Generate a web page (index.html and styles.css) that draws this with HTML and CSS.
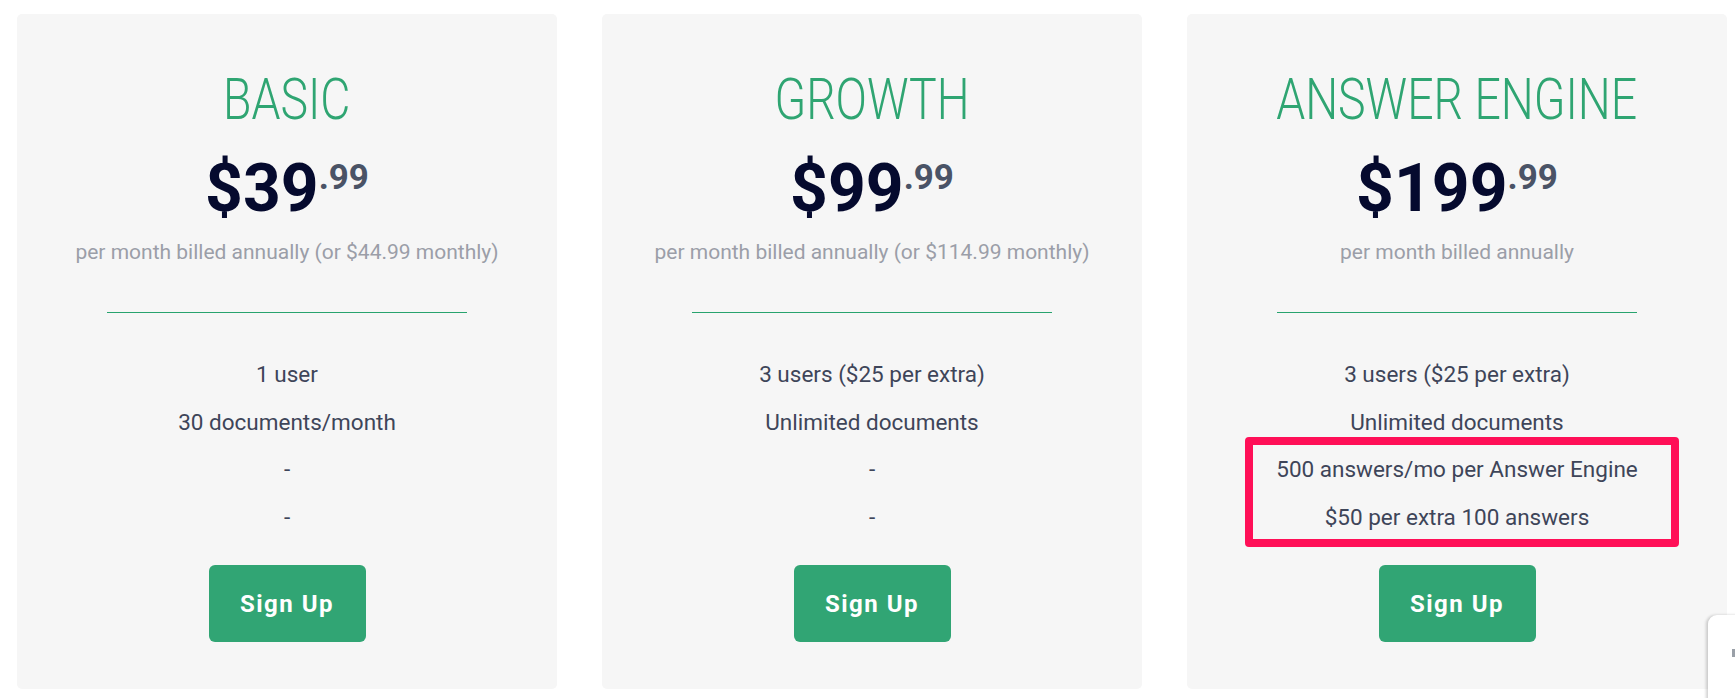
FILE: index.html
```html
<!DOCTYPE html>
<html lang="en">
<head>
<meta charset="utf-8">
<title>Pricing</title>
<link rel="stylesheet" href="styles.css">
</head>
<body>
<div class="pricing">
  <div class="card">
    <h2 class="plan"><span class="plan-name">BASIC</span></h2>
    <div class="price"><span class="amount">$39</span><span class="cents">.99</span></div>
    <p class="billing">per month billed annually (or $44.99 monthly)</p>
    <div class="divider"></div>
    <ul class="features">
      <li>1 user</li>
      <li>30 documents/month</li>
      <li>-</li>
      <li>-</li>
    </ul>
    <a class="signup" href="#">Sign Up</a>
  </div>
  <div class="card">
    <h2 class="plan"><span class="plan-name">GROWTH</span></h2>
    <div class="price"><span class="amount">$99</span><span class="cents">.99</span></div>
    <p class="billing">per month billed annually (or $114.99 monthly)</p>
    <div class="divider"></div>
    <ul class="features">
      <li>3 users ($25 per extra)</li>
      <li>Unlimited documents</li>
      <li>-</li>
      <li>-</li>
    </ul>
    <a class="signup" href="#">Sign Up</a>
  </div>
  <div class="card">
    <h2 class="plan"><span class="plan-name">ANSWER ENGINE</span></h2>
    <div class="price"><span class="amount">$199</span><span class="cents">.99</span></div>
    <p class="billing">per month billed annually</p>
    <div class="divider"></div>
    <ul class="features">
      <li>3 users ($25 per extra)</li>
      <li>Unlimited documents</li>
      <li>500 answers/mo per Answer Engine</li>
      <li>$50 per extra 100 answers</li>
    </ul>
    <a class="signup" href="#">Sign Up</a>
    <div class="highlight"></div>
  </div>
</div>
<div class="widget"><span class="widget-mark"></span></div>
</body>
</html>
```
FILE: styles.css
```css
html, body {
  margin: 0;
  padding: 0;
  background: #ffffff;
  font-family: Roboto, "Liberation Sans", Arial, sans-serif;
}

.pricing {
  display: flex;
  gap: 45px;
  padding: 14px 0 0 17px;
}

.card {
  position: relative;
  width: 540px;
  box-sizing: border-box;
  background: #f6f6f6;
  border-radius: 5px;
  padding: 50px 0 47px;
  display: flex;
  flex-direction: column;
  align-items: center;
  text-align: center;
}

.plan {
  margin: 0;
  font-size: 58px;
  line-height: 70px;
  font-weight: 300;
  color: #2fa572;
  white-space: nowrap;
}

.plan-name {
  display: inline-block;
  transform: scaleX(0.8);
}

.price {
  margin-top: 22px;
  display: flex;
  justify-content: center;
  align-items: flex-start;
}

.amount {
  font-size: 66px;
  line-height: 66px;
  font-weight: 700;
  color: #050a2e;
}

.cents {
  font-size: 35px;
  line-height: 43px;
  font-weight: 700;
  color: #4a5366;
}

.billing {
  margin: 15px 0 0;
  font-size: 21px;
  line-height: 31px;
  color: #9b9ea8;
}

.divider {
  margin-top: 44px;
  width: 360px;
  height: 1px;
  background: #28a36e;
}

.features {
  list-style: none;
  margin: 38px 0 0;
  padding: 0;
}

.features li {
  font-size: 22.5px;
  line-height: 47.5px;
  color: #3e4559;
}

.signup {
  margin-top: 24px;
  width: 157px;
  height: 77px;
  display: flex;
  align-items: center;
  justify-content: center;
  background: #31a574;
  border-radius: 6px;
  color: #ffffff;
  font-size: 24px;
  font-weight: 700;
  letter-spacing: 1.5px;
  text-decoration: none;
}

.highlight {
  position: absolute;
  left: 58px;
  top: 423px;
  width: 434px;
  height: 110px;
  box-sizing: border-box;
  border: 8px solid #ff0f57;
  border-radius: 4px;
  pointer-events: none;
}

.widget {
  position: fixed;
  left: 1708px;
  top: 615px;
  width: 60px;
  height: 120px;
  background: #ffffff;
  border-radius: 9px 0 0 0;
  box-shadow: -2px 0 3px rgba(0, 0, 0, 0.18);
}

.widget-mark {
  position: absolute;
  left: 24px;
  top: 34px;
  width: 3px;
  height: 8px;
  background: #9aa0a8;
}
```
